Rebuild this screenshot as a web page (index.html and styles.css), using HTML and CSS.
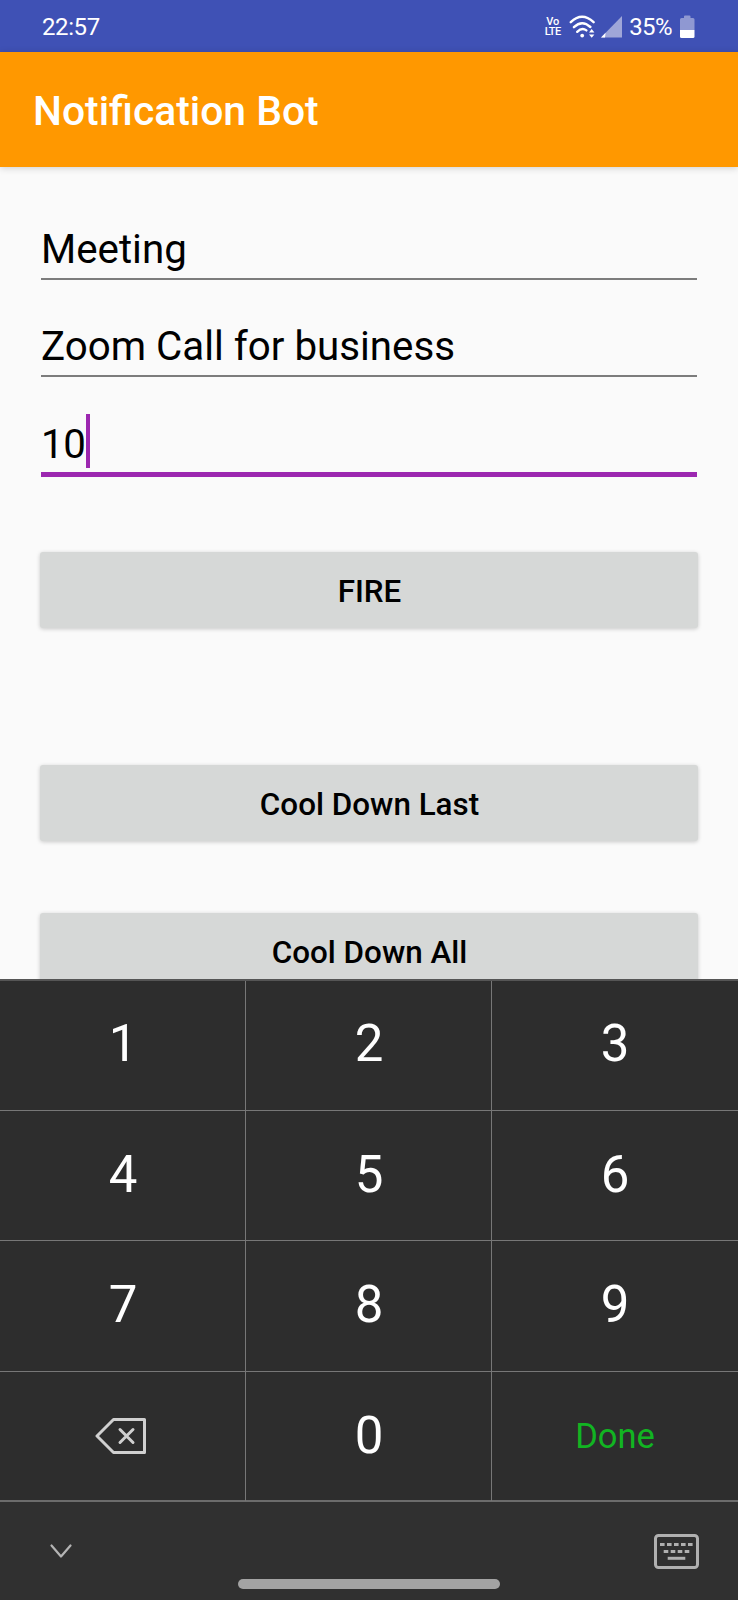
FILE: index.html
```html
<!DOCTYPE html>
<html lang="en">
<head>
<meta charset="utf-8">
<title>Notification Bot</title>
<link rel="stylesheet" href="styles.css">
</head>
<body>
<div class="screen">
  <div class="status">
    <span class="time">22:57</span>
    <div class="indicators">
      <span class="volte"><span class="vo">Vo</span><span class="lte">LTE</span></span>
      <svg class="wifi" width="27" height="24" viewBox="0 0 27 24" fill="none" stroke="#fff" stroke-width="2.4" stroke-linecap="round">
        <path d="M1.800 7.200Q13 -3.600 24.600 7.200"/>
        <path d="M4.900 12.200Q13 4.200 21.400 12"/>
        <path d="M8.200 16.800Q13 12.200 17.400 15.400"/>
        <circle cx="13.200" cy="20.600" r="1.900" fill="#fff" stroke="none"/>
        <path d="M20 17.400l2.700-3.400 2.700 3.400zM20 19.400l2.700 3.400 2.700-3.400z" fill="#fff" stroke="none"/>
      </svg>
      <svg class="signal" width="21" height="22" viewBox="0 0 21 22">
        <path d="M0 21.500L21 0V21.500Z" fill="#9fa6d8"/>
        <path d="M0 21.500L4.600 16.800L4 21.500Z" fill="#fff"/>
      </svg>
      <span class="percent">35%</span>
      <svg class="battery" width="15" height="24" viewBox="0 0 15 24">
        <path d="M4 3V1.500Q4 .5 5 .5H9.500Q10.500 .5 10.500 1.500V3H13Q14.500 3 14.500 4.500V15H0V4.500Q0 3 1.500 3Z" fill="#8f98d2"/>
        <path d="M0 15H14.500V21.500Q14.500 23 13 23H1.500Q0 23 0 21.500Z" fill="#fff"/>
      </svg>
    </div>
  </div>
  <header class="appbar"><h1 class="title">Notification Bot</h1></header>
  <main class="content">
    <div class="field"><span class="value">Meeting</span></div>
    <div class="field"><span class="value">Zoom Call for business</span></div>
    <div class="field active"><span class="value number">10</span><span class="caret"></span></div>
    <button class="button fire">FIRE</button>
    <button class="button last">Cool Down Last</button>
    <button class="button all">Cool Down All</button>
  </main>
  <section class="keyboard">
    <div class="keys">
      <div class="key">1</div><div class="key">2</div><div class="key">3</div>
      <div class="key">4</div><div class="key">5</div><div class="key">6</div>
      <div class="key">7</div><div class="key">8</div><div class="key">9</div>
      <div class="key delete">
        <svg class="backspace" width="52" height="38" viewBox="0 0 52 38" fill="none" stroke="#d0d0d0" stroke-width="3" stroke-linejoin="round" stroke-linecap="round">
          <path d="M18.500 2.500H49.500V35.500H18.500L2 19Z"/>
          <path d="M25 12.500L38 25.500M38 12.500L25 25.500"/>
        </svg>
      </div>
      <div class="key">0</div><div class="key done">Done</div>
    </div>
    <div class="navbar">
      <svg class="chevron" width="22" height="15" viewBox="0 0 22 15" fill="none" stroke="#b4b4b4" stroke-width="2.200" stroke-linecap="round" stroke-linejoin="round"><path d="M1.500 1.500L11 12.500L20.500 1.500"/></svg>
      <div class="handle"></div>
      <svg class="layout" width="45" height="35" viewBox="0 0 45 35" fill="none" stroke="#b0b0b0">
        <rect x="1.500" y="1.500" width="42" height="32" rx="3" stroke-width="3"/>
        <path d="M6 10.500H39" stroke-width="3" stroke-dasharray="4.600 2.400"/>
        <path d="M9.700 17.500H35.500" stroke-width="3" stroke-dasharray="4.600 2.400"/>
        <path d="M13.700 24.300H31.300" stroke-width="3"/>
      </svg>
    </div>
  </section>
</div>
</body>
</html>
```
FILE: styles.css
```css
* { box-sizing: border-box; }
body { margin: 0; background: #fafafa; font-family: Roboto, "Liberation Sans", sans-serif; }
.screen { width: 738px; height: 1600px; display: flex; flex-direction: column; overflow: hidden; }

.status { height: 52px; flex: none; background: #3f51b5; color: #fff; display: flex; justify-content: space-between; align-items: center; padding: 1px 43px 0 42px; font-size: 24px; }
.time { letter-spacing: -.4px; }
.indicators { display: flex; align-items: center; }
.volte { display: flex; flex-direction: column; align-items: center; width: 17px; font-size: 11px; line-height: 10px; font-weight: 500; }
.lte { letter-spacing: -.5px; }
.wifi { margin-left: 8px; }
.signal { margin-left: 5px; }
.percent { margin-left: 7px; letter-spacing: -.6px; }
.battery { margin-left: 8px; }

.appbar { height: 115px; flex: none; background: #ff9800; display: flex; align-items: center; padding: 3px 33px 0; box-shadow: 0 1px 7px rgba(0,0,0,.18); }
.title { margin: 0; color: #fff; font-size: 40.8px; font-weight: 500; line-height: 48px; }

.content { height: 812px; flex: none; overflow: hidden; padding: 53px 40px 0; display: flex; flex-direction: column; }
.field { flex: none; height: 60px; margin: 0 1px 37px; padding-top: 1px; border-bottom: 2px solid #7c7c7c; display: flex; align-items: center; font-size: 40.3px; color: #000; }
.active { height: 63px; margin-bottom: 75px; padding-top: 0; border-bottom: 5px solid #9c27b0; }
.number { letter-spacing: -.4px; padding-top: 2px; }
.caret { width: 4px; height: 54px; background: #9c27b0; align-self: flex-start; }
.button { flex: none; height: 76px; border: 0; border-radius: 3px; background: #d6d8d7; color: #000; font: 500 31.4px Roboto, sans-serif; padding: 3px 0 0 1px; box-shadow: 0 1px 4px rgba(0,0,0,.2); }
.last { margin-top: 137px; }
.all { margin-top: 72px; }

.keyboard { flex: 1; display: flex; flex-direction: column; background: #2d2d2d; border-top: 2px solid #555; }
.keys { display: grid; grid-template-columns: 246px 246px 246px; grid-template-rows: 130px 130px 131px 129px; border-bottom: 2px solid #6c6c6c; height: 521px; }
.key { display: flex; align-items: center; justify-content: center; color: #fff; font-size: 51px; padding: 0 0 3px 1px; border-right: 1px solid #777; border-bottom: 1px solid #777; }
.key:nth-child(-n+3) { padding-bottom: 4px; }
.key:nth-child(3n) { border-right: 0; padding-left: 0; }
.key:nth-child(n+10) { border-bottom: 0; }
.key.delete { padding: 0 4px 2px 0; }
.key.done { color: #12b422; font-size: 34.500px; padding-bottom: 2px; }
.navbar { flex: 1; background: #303030; display: grid; grid-template-columns: 188px 262px 1fr; padding: 0 39px 0 50px; align-items: start; }
.chevron { margin-top: 42px; }
.handle { height: 10px; border-radius: 5px; background: #a3a3a3; margin-top: 77px; }
.layout { margin-top: 32px; justify-self: end; }
```
